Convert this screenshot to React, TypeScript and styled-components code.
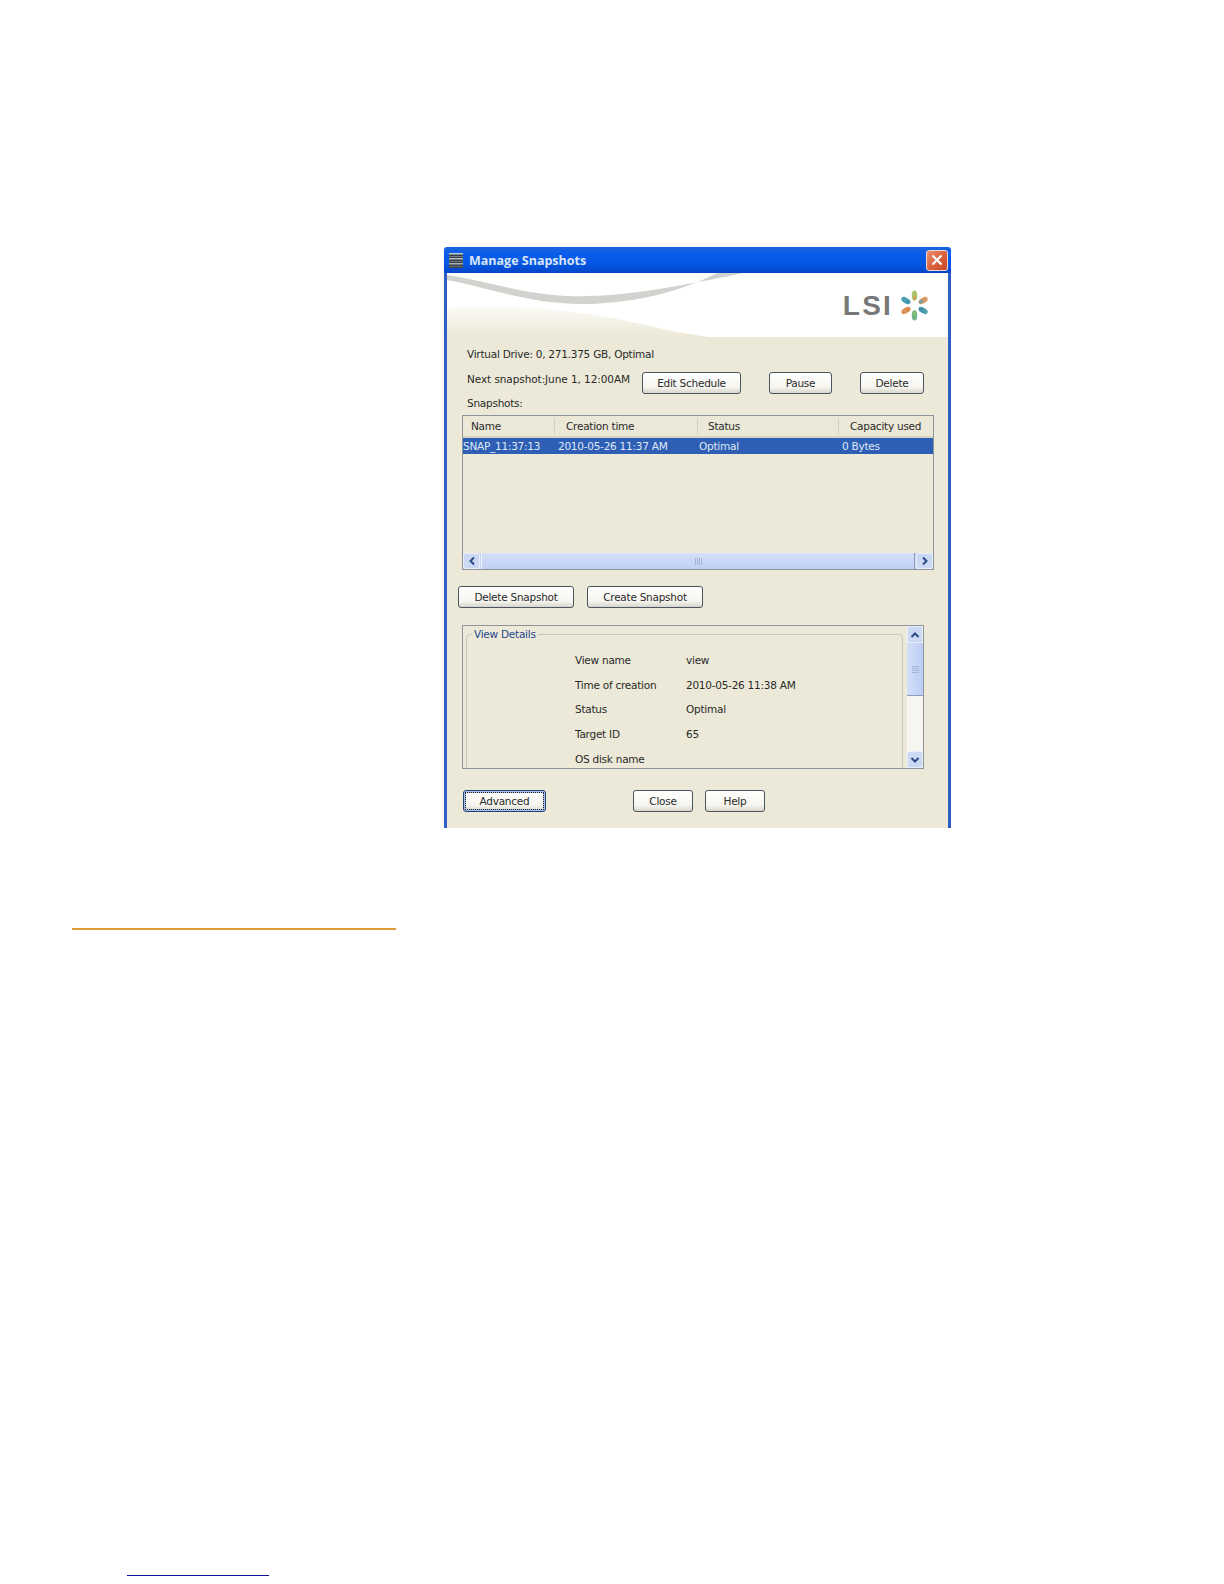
import React from 'react';
import styled, { createGlobalStyle } from 'styled-components';

const GlobalStyle = createGlobalStyle`
    html, body {
        margin: 0;
        padding: 0;
        background: #fff;
    }
    * {
        box-sizing: border-box;
    }
`

const Page = styled.div`
    width: 1224px;
    height: 1584px;
    padding-top: 247px;
    overflow: hidden;
    font-family: "DejaVu Sans", sans-serif;
    font-size: 10.5px;
    letter-spacing: -0.25px;
    color: #2a2a2a;
`

const Window = styled.div`
    display: flex;
    flex-direction: column;
    width: 507px;
    height: 581px;
    margin-left: 444px;
    overflow: hidden;
    border-radius: 3px 3px 0 0;
`

const TitleBar = styled.header`
    display: flex;
    align-items: center;
    flex: none;
    height: 26px;
    padding: 0 3px 0 4px;
    background: linear-gradient(180deg, #1a66dc 0%, #0a5cec 25%, #0558e6 60%, #0347c8 100%);
`

const TitleText = styled.span`
    margin-left: 5px;
    font-family: "Open Sans", sans-serif;
    font-size: 12.5px;
    font-weight: 700;
    letter-spacing: 0;
    color: #d8e5f8;
`

const CloseButton = styled.button`
    display: flex;
    align-items: center;
    justify-content: center;
    width: 22px;
    height: 21px;
    margin-left: auto;
    padding: 0;
    border: 1px solid #f0d8d0;
    border-radius: 3px;
    background: linear-gradient(135deg, #e8906e 0%, #d9603c 55%, #c24a2a 100%);
`

const Client = styled.div`
    flex: 1;
    min-height: 0;
    border-left: 3px solid #2f5fc4;
    border-right: 3px solid #2f5fc4;
    background: #ece9d8;
`

const Banner = styled.div`
    position: relative;
    display: flex;
    align-items: flex-start;
    justify-content: flex-end;
    height: 64px;
    padding: 18px 17px 0 0;
`

const BannerArt = styled.svg`
    position: absolute;
    top: 0;
    left: 0;
    width: 100%;
    height: 100%;
`

const LogoText = styled.span`
    position: relative;
    margin-right: 5px;
    font-family: "Liberation Sans", sans-serif;
    font-size: 28px;
    font-weight: 700;
    line-height: 30px;
    letter-spacing: 2.2px;
    color: #787876;
`

const LogoMark = styled.svg`
    position: relative;
    width: 33px;
    height: 33px;
    margin-top: -2px;
`

const InfoLine = styled.div`
    height: 16px;
    margin: 9px 0 0 20px;
    line-height: 16px;
`

const SnapshotsLabel = styled(InfoLine)`
    margin-top: 1px;
`

const ScheduleRow = styled.div`
    display: flex;
    align-items: flex-start;
    gap: 28px;
    height: 23px;
    margin: 9px 0 0 20px;
`

const NextText = styled.span`
    width: 147px;
    line-height: 16px;
    letter-spacing: -0.08px;
    white-space: nowrap;
`

const Button = styled.button<{ $width: number; $focused?: boolean }>`
    flex: none;
    width: ${p => p.$width}px;
    height: 22px;
    padding: 0 0 1px;
    border: 1px solid ${p => (p.$focused ? '#24407c' : '#4a5560')};
    border-radius: 3px;
    background: linear-gradient(180deg, #ffffff 0%, #f6f5ef 70%, #d8d6cc 100%);
    font: inherit;
    letter-spacing: inherit;
    color: inherit;
    outline: ${p => (p.$focused ? '1px dotted #222' : 'none')};
    outline-offset: -3px;
    box-shadow: ${p => (p.$focused ? 'inset 0 0 0 2px #a9c0e8' : 'none')};
`

const ScheduleButton = styled(Button)`
    margin-top: 1px;
`

const Table = styled.div`
    display: flex;
    flex-direction: column;
    width: 472px;
    height: 155px;
    margin: 4px 0 0 15px;
    border: 1px solid #8d949a;
`

const TableRow = styled.div<{ $head?: boolean }>`
    display: grid;
    grid-template-columns: 91px 143px 141px 95px;
    flex: none;
    height: ${p => (p.$head ? 22 : 16)}px;
    align-items: center;
    background: ${p => (p.$head ? '#ebe8d8' : '#2f5fb5')};
    color: ${p => (p.$head ? 'inherit' : '#dfe8f6')};
    border-bottom: ${p => (p.$head ? '2px solid #d6d3c2' : 'none')};
    white-space: nowrap;
`

const HeadCell = styled.div<{ $pad: number; $divider?: boolean }>`
    height: 16px;
    padding-left: ${p => p.$pad}px;
    line-height: 16px;
    border-left: ${p => (p.$divider ? '1px solid #d4d1c0' : 'none')};
`

const RowCell = styled.div<{ $pad: number }>`
    padding-left: ${p => p.$pad}px;
`

const TableBody = styled.div`
    flex: 1;
`

const HScroll = styled.div`
    display: flex;
    flex: none;
    height: 16px;
    background: #c6d5f4;
`

const ScrollButton = styled.div`
    display: flex;
    align-items: center;
    justify-content: center;
    flex: none;
    width: 17px;
    height: 16px;
    border: 1px solid #e8eefa;
    border-radius: 2px;
    background: #cbd9f5;
`

const HThumb = styled.div`
    display: flex;
    align-items: center;
    justify-content: center;
    flex: 1;
    margin: 0 1px;
    border-left: 1px solid #eef2fb;
    border-right: 1px solid #8d9cb8;
    background: linear-gradient(180deg, #d4e0f8 0%, #c0d0f3 100%);
`

const SnapshotButtons = styled.div`
    display: flex;
    gap: 13px;
    margin: 16px 0 0 11px;
`

const Details = styled.div`
    display: flex;
    width: 462px;
    height: 144px;
    margin: 17px 0 0 15px;
    border: 1px solid #8d949a;
    overflow: hidden;
`

const DetailsPane = styled.div`
    flex: 1;
    min-width: 0;
    padding: 2px 4px 0 3px;
`

const DetailsBox = styled.fieldset`
    height: 170px;
    margin: 0;
    padding: 0;
    border: 1px solid #c9c6b4;
    border-radius: 4px;
`

const DetailsLegend = styled.legend`
    margin-left: 5px;
    padding: 0 2px;
    color: #23478f;
`

const DetailGrid = styled.div`
    display: grid;
    grid-template-columns: 111px 1fr;
    grid-auto-rows: 24.6px;
    align-items: center;
    margin: 8px 0 0 108px;
    white-space: nowrap;
`

const VScroll = styled.div`
    display: flex;
    flex-direction: column;
    flex: none;
    width: 16px;
    background: #f6f5f0;
`

const VScrollButton = styled(ScrollButton)`
    width: 16px;
    height: 17px;
`

const VThumb = styled.div`
    display: flex;
    align-items: center;
    justify-content: center;
    flex: none;
    height: 53px;
    border-bottom: 1px solid #8d9cb8;
    background: linear-gradient(90deg, #d4e0f8 0%, #bccdf2 100%);
`

const VTrack = styled.div`
    flex: 1;
`

const Footer = styled.div`
    display: flex;
    margin: 21px 0 0 16px;
`

const FooterGap = styled.div<{ $width: number }>`
    flex: none;
    width: ${p => p.$width}px;
`

const OrangeRule = styled.hr`
    width: 324px;
    height: 2px;
    margin: 100px 0 0 72px;
    border: 0;
    background: #e29a34;
`

const BlueRule = styled.hr`
    width: 142px;
    height: 1px;
    margin: 645px 0 0 127px;
    border: 0;
    background: #10109a;
`

const ArrowIcon: React.FC<{ dir: 'left' | 'right' | 'up' | 'down' }> = ({ dir }) => {
    const points = {
        left: '7,1.5 3.5,5 7,8.5',
        right: '3,1.5 6.5,5 3,8.5',
        up: '1.5,7 5,3.5 8.5,7',
        down: '1.5,3 5,6.5 8.5,3',
    }[dir];
    return (
        <svg width="10" height="10" viewBox="0 0 10 10">
            <polyline points={points} fill="none" stroke="#2b4a86" strokeWidth="2" />
        </svg>
    );
}

const StackIcon: React.FC = () => (
    <svg width="16" height="17" viewBox="0 0 16 17">
        <rect x="1" y="1" width="14" height="15" fill="#3a4048" />
        <rect x="1" y="1" width="14" height="1.5" fill="#c4cad2" />
        <rect x="1" y="4" width="14" height="1" fill="#727a84" />
        <rect x="1" y="6" width="14" height="1.5" fill="#b4bbc4" />
        <rect x="1" y="9" width="14" height="1" fill="#6a727c" />
        <rect x="1" y="11" width="14" height="1.5" fill="#a8b0ba" />
        <rect x="1" y="14" width="14" height="1" fill="#626a74" />
    </svg>
);

const petals: [number, string, string][] = [
    [0, '#a9c46a', '#d9a05a'],
    [60, '#d99a62', '#5fa6b8'],
    [120, '#4d9fb0', '#3f8aa8'],
    [180, '#6fb38a', '#8fc06a'],
    [240, '#e0925a', '#d9864c'],
    [300, '#4f9fb4', '#3f93b0'],
];

const StarLogo: React.FC = () => (
    <LogoMark viewBox="0 0 30 30">
        {petals.map(([angle, outer, inner]) => (
            <g key={angle} transform={`rotate(${angle} 15 15)`}>
                <ellipse cx="15" cy="6" rx="2.5" ry="4.6" fill={outer} />
                <ellipse cx="15" cy="8" rx="1.2" ry="2.2" fill={inner} />
            </g>
        ))}
    </LogoMark>
);

const rows = [
    ['View name', 'view'],
    ['Time of creation', '2010-05-26 11:38 AM'],
    ['Status', 'Optimal'],
    ['Target ID', '65'],
    ['OS disk name', ''],
];

const App: React.FC = () => {
    return (
        <Page>
            <GlobalStyle />
            <Window>
                <TitleBar>
                    <StackIcon />
                    <TitleText>Manage Snapshots</TitleText>
                    <CloseButton type="button" aria-label="Close">
                        <svg width="14" height="14" viewBox="0 0 14 14">
                            <path d="M2.5 2.5 L11.5 11.5 M11.5 2.5 L2.5 11.5" stroke="#fff" strokeWidth="2.2" />
                        </svg>
                    </CloseButton>
                </TitleBar>
                <Client>
                    <Banner>
                        <BannerArt viewBox="0 0 501 64" preserveAspectRatio="none">
                            <defs>
                                <linearGradient id="bannerBeige" x1="0" y1="0" x2="0" y2="1">
                                    <stop offset="0" stopColor="#fbfaf6" />
                                    <stop offset="1" stopColor="#ece9d8" />
                                </linearGradient>
                            </defs>
                            <rect width="501" height="64" fill="#ffffff" />
                            <path d="M0 35 C70 30 130 38 170 46 C200 52 230 60 262 64 L0 64 Z" fill="url(#bannerBeige)" />
                            <path d="M0 2 C40 8 70 20 120 23 C170 25 230 14 296 0 L270 0 C235 18 190 30 140 31 C85 32 40 14 0 7 Z" fill="#d2d2ce" />
                        </BannerArt>
                        <LogoText>LSI</LogoText>
                        <StarLogo />
                    </Banner>
                    <InfoLine>Virtual Drive: 0, 271.375 GB, Optimal</InfoLine>
                    <ScheduleRow>
                        <NextText>Next snapshot:June 1, 12:00AM</NextText>
                        <ScheduleButton type="button" $width={99}>Edit Schedule</ScheduleButton>
                        <ScheduleButton type="button" $width={63}>Pause</ScheduleButton>
                        <ScheduleButton type="button" $width={64}>Delete</ScheduleButton>
                    </ScheduleRow>
                    <SnapshotsLabel>Snapshots:</SnapshotsLabel>
                    <Table>
                        <TableRow $head>
                            <HeadCell $pad={8}>Name</HeadCell>
                            <HeadCell $pad={11} $divider>Creation time</HeadCell>
                            <HeadCell $pad={10} $divider>Status</HeadCell>
                            <HeadCell $pad={11} $divider>Capacity used</HeadCell>
                        </TableRow>
                        <TableRow>
                            <RowCell $pad={0}>SNAP_11:37:13</RowCell>
                            <RowCell $pad={4}>2010-05-26 11:37 AM</RowCell>
                            <RowCell $pad={2}>Optimal</RowCell>
                            <RowCell $pad={4}>0 Bytes</RowCell>
                        </TableRow>
                        <TableBody />
                        <HScroll>
                            <ScrollButton><ArrowIcon dir="left" /></ScrollButton>
                            <HThumb>
                                <svg width="7" height="7" viewBox="0 0 7 7">
                                    <path d="M0.5 0 V7 M2.5 0 V7 M4.5 0 V7 M6.5 0 V7" stroke="#a3b4d6" strokeWidth="1" />
                                </svg>
                            </HThumb>
                            <ScrollButton><ArrowIcon dir="right" /></ScrollButton>
                        </HScroll>
                    </Table>
                    <SnapshotButtons>
                        <Button type="button" $width={116}>Delete Snapshot</Button>
                        <Button type="button" $width={116}>Create Snapshot</Button>
                    </SnapshotButtons>
                    <Details>
                        <DetailsPane>
                            <DetailsBox>
                                <DetailsLegend>View Details</DetailsLegend>
                                <DetailGrid>
                                    {rows.map(([label, value]) => (
                                        <React.Fragment key={label}>
                                            <span>{label}</span>
                                            <span>{value}</span>
                                        </React.Fragment>
                                    ))}
                                </DetailGrid>
                            </DetailsBox>
                        </DetailsPane>
                        <VScroll>
                            <VScrollButton><ArrowIcon dir="up" /></VScrollButton>
                            <VThumb>
                                <svg width="7" height="7" viewBox="0 0 7 7">
                                    <path d="M0 0.5 H7 M0 2.5 H7 M0 4.5 H7 M0 6.5 H7" stroke="#a3b4d6" strokeWidth="1" />
                                </svg>
                            </VThumb>
                            <VTrack />
                            <VScrollButton><ArrowIcon dir="down" /></VScrollButton>
                        </VScroll>
                    </Details>
                    <Footer>
                        <Button type="button" $width={83} $focused>Advanced</Button>
                        <FooterGap $width={87} />
                        <Button type="button" $width={60}>Close</Button>
                        <FooterGap $width={12} />
                        <Button type="button" $width={60}>Help</Button>
                    </Footer>
                </Client>
            </Window>
            <OrangeRule />
            <BlueRule />
        </Page>
    );
}

export default App;
